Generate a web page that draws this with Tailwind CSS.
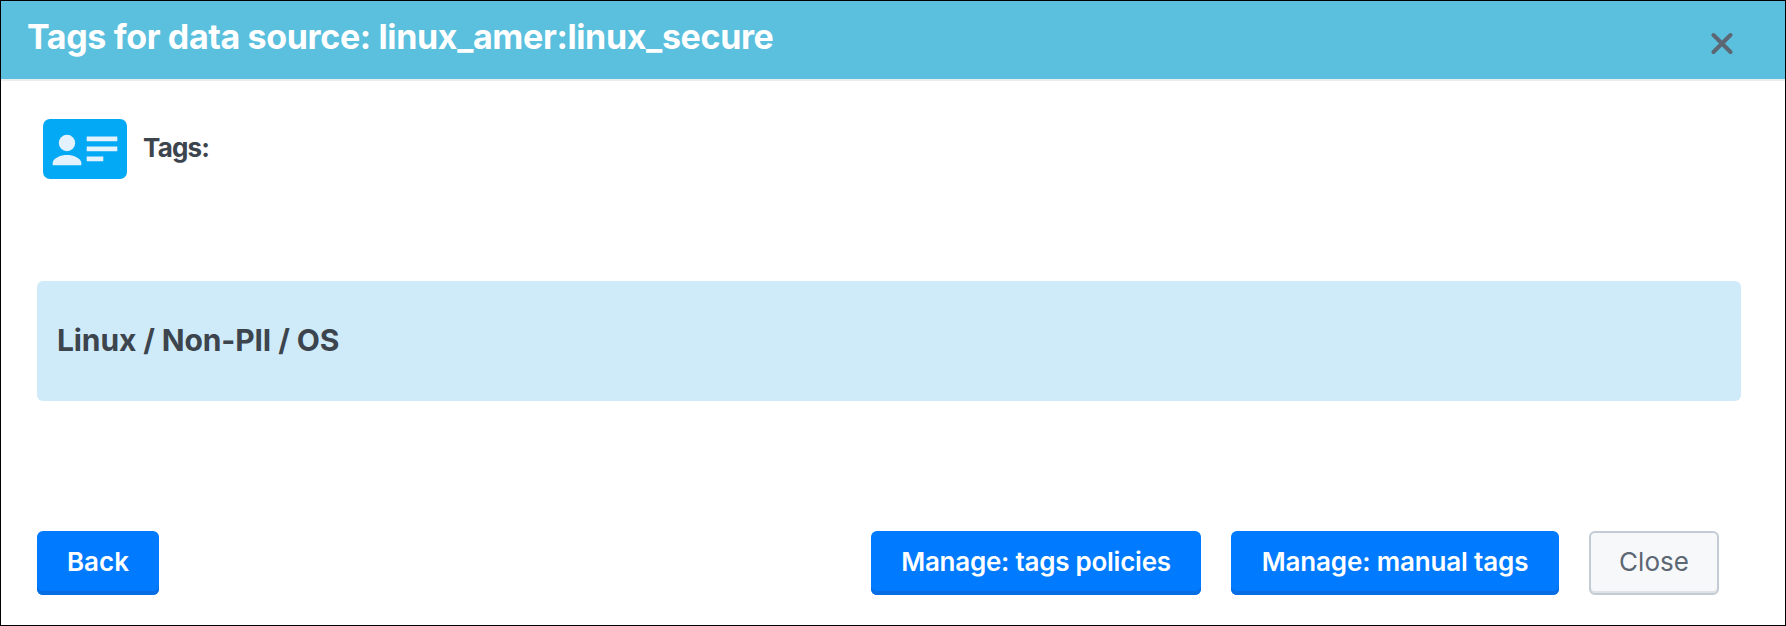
<!DOCTYPE html>
<html lang="en">
<head>
<meta charset="utf-8">
<title>Tags for data source</title>
<script src="https://cdn.jsdelivr.net/npm/@tailwindcss/browser@4"></script>
</head>
<body class="font-['Inter',sans-serif] text-[#3c444d]">
<div class="flex h-[626px] w-[1786px] flex-col border border-black bg-white">
  <header class="flex h-20 shrink-0 items-start justify-between border-b-2 border-[#ebeeef] bg-[#5bc0de] pr-[52px] pl-[26px]">
    <h1 class="pt-3 text-[34px] leading-[48px] font-bold tracking-[-0.36px] whitespace-nowrap text-white">Tags for data source: linux_amer:linux_secure</h1>
    <button aria-label="Close dialog" class="mt-[31px]">
      <svg class="block" width="22" height="23" viewBox="0 0 22 23" fill="none" stroke="#5c6773" stroke-width="4" stroke-linecap="round"><path d="M2.500 3 19.500 20M19.500 3 2.500 20"/></svg>
    </button>
  </header>

  <main class="flex grow flex-col pr-11 pl-9">
    <div class="mt-[37px] flex h-[62px] items-center gap-4 pl-1.5">
      <svg class="block shrink-0" width="84" height="60" viewBox="0 0 84 60">
        <rect width="84" height="60" rx="7" fill="#03a9f4"/>
        <g fill="#e3f2fd">
          <circle cx="24" cy="24" r="8.2"/>
          <path d="M9.7 46.2V43C11.5 38.7 17.5 36 24 36S36.500 38.700 38.300 43V46.200Z"/>
          <path d="M43.700 17.500H74.300V22.200H43.700ZM43.700 27.500H74.300V32.200H43.700ZM43.700 37.500H60.300V42.200H43.700Z"/>
        </g>
      </svg>
      <span class="pb-[3px] text-[26px] leading-8 font-bold tracking-[-0.8px]">Tags:</span>
    </div>

    <section class="mt-[101px] flex h-[120px] shrink-0 items-center rounded-md bg-[#cfebf9] px-5 pb-0.5">
      <p class="text-[30px] leading-9 font-bold tracking-[-0.12px]">Linux / Non-PII / OS</p>
    </section>

    <footer class="mt-[130px] flex h-16 shrink-0 gap-[30px] pr-[22px] text-[26px] leading-8 whitespace-nowrap">
      <button class="mr-auto w-[122px] rounded-md bg-[#007bff] pb-0.5 font-semibold text-white shadow-[inset_0_-4px_0_#076de2]">Back</button>
      <button class="w-[330px] rounded-md bg-[#007bff] pb-0.5 font-semibold tracking-[-0.25px] text-white shadow-[inset_0_-4px_0_#076de2]">Manage: tags policies</button>
      <button class="w-[328px] rounded-md bg-[#007bff] pb-0.5 font-semibold tracking-[-0.15px] text-white shadow-[inset_0_-4px_0_#076de2]">Manage: manual tags</button>
      <button class="w-[130px] rounded-md border-2 border-[#c3cbd4] bg-[#f7f8fa] pb-0.5 text-[#5c6773] shadow-[inset_0_-2px_0_#dfe1e4]">Close</button>
    </footer>
  </main>
</div>
</body>
</html>
